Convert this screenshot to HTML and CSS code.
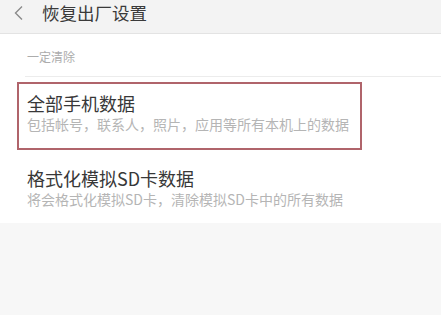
FILE: index.html
```html
<!DOCTYPE html>
<html lang="zh-CN">
<head>
<meta charset="utf-8">
<link rel="stylesheet" href="styles.css">
</head>
<body>
<header class="topbar">
  <svg class="back" width="12" height="16" viewBox="0 0 12 16"><path d="M9 1.5 L2.5 8 L9 14.5" fill="none" stroke="#8a8a8a" stroke-width="1.4"/></svg>
  <span class="title">恢复出厂设置</span>
</header>
<main class="panel">
  <div class="label">一定清除</div>
  <div class="sep"></div>
  <div class="item first">
    <div class="item-title">全部手机数据</div>
    <div class="item-sub">包括帐号，联系人，照片，应用等所有本机上的数据</div>
    <div class="mark"></div>
  </div>
  <div class="item second">
    <div class="item-title">格式化模拟SD卡数据</div>
    <div class="item-sub">将会格式化模拟SD卡，清除模拟SD卡中的所有数据</div>
  </div>
</main>
</body>
</html>
```
FILE: styles.css
```css
html, body {
  margin: 0;
  padding: 0;
  background: #f7f7f7;
  font-family: "Noto Sans CJK SC", "Noto Sans", sans-serif;
  width: 441px;
  height: 315px;
  overflow: hidden;
}
.topbar {
  height: 33px;
  background: #f3f3f3;
  border-bottom: 1px solid #e3e3e3;
  display: flex;
  align-items: center;
  padding-left: 13px;
}
.back {
  display: block;
  margin-top: -7px;
}
.title {
  margin-left: 17px;
  margin-top: -7px;
  font-size: 17.5px;
  color: #3a3a3a;
  line-height: 22px;
}
.panel {
  background: #ffffff;
  padding-top: 15px;
}
.label {
  padding-left: 27px;
  font-size: 12px;
  line-height: 16px;
  color: #acacac;
  padding-bottom: 11px;
}
.sep {
  margin-left: 25px;
  height: 1px;
  background: #ececec;
}
.item {
  position: relative;
  padding: 14px 0 16px 27px;
}
.item.second {
  padding: 16px 0 14px 27px;
}
.item-title {
  font-size: 18px;
  line-height: 24px;
  color: #383838;
}
.item-sub {
  font-size: 14px;
  line-height: 19px;
  color: #b5b5b5;
}
.mark {
  position: absolute;
  left: 17px;
  top: 5px;
  width: 345px;
  height: 68px;
  box-sizing: border-box;
  border: 2px solid #b0646b;
}
```
